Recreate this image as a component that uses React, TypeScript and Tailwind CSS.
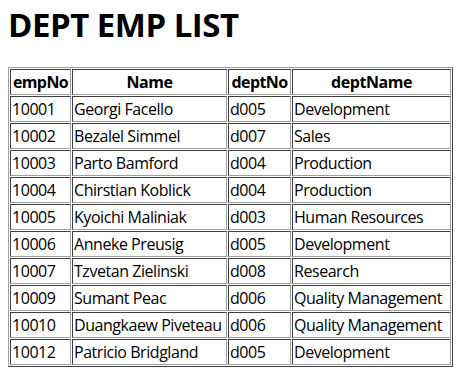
const rows = [
  ["10001", "Georgi Facello", "d005", "Development"],
  ["10002", "Bezalel Simmel", "d007", "Sales"],
  ["10003", "Parto Bamford", "d004", "Production"],
  ["10004", "Chirstian Koblick", "d004", "Production"],
  ["10005", "Kyoichi Maliniak", "d003", "Human Resources"],
  ["10006", "Anneke Preusig", "d005", "Development"],
  ["10007", "Tzvetan Zielinski", "d008", "Research"],
  ["10009", "Sumant Peac", "d006", "Quality Management"],
  ["10010", "Duangkaew Piveteau", "d006", "Quality Management"],
  ["10012", "Patricio Bridgland", "d005", "Development"],
];

const cell =
  "p-px h-[26px] leading-[22px] whitespace-nowrap overflow-hidden border border-t-[#404040] border-l-[#404040] border-b-[#a0a0a0] border-r-[#a0a0a0]";

export default function App() {
  return (
    <div className="min-h-screen bg-white text-black px-2 pt-[2px] font-['Open_Sans',sans-serif]">
      <h1 className="text-[33px] font-bold leading-[45px] tracking-[-0.5px]">DEPT EMP LIST</h1>
      <table className="mt-[20px] table-fixed w-[445px] border-separate border-spacing-[1px] border border-t-[#a0a0a0] border-l-[#a0a0a0] border-b-[#404040] border-r-[#404040] text-[16px] tracking-[-0.45px]">
        <thead>
          <tr>
            <th className={`${cell} w-[61px] text-center font-bold tracking-[-0.6px]`}>empNo</th>
            <th className={`${cell} w-[155px] text-center font-bold`}>Name</th>
            <th className={`${cell} w-[63px] text-center font-bold tracking-[-0.6px]`}>deptNo</th>
            <th className={`${cell} w-[159px] text-center font-bold`}>deptName</th>
          </tr>
        </thead>
        <tbody>
          {rows.map((r) => (
            <tr key={r[0]}>
              {r.map((v, i) => (
                <td key={i} className={`${cell} text-left`}>
                  {v}
                </td>
              ))}
            </tr>
          ))}
        </tbody>
      </table>
    </div>
  );
}
